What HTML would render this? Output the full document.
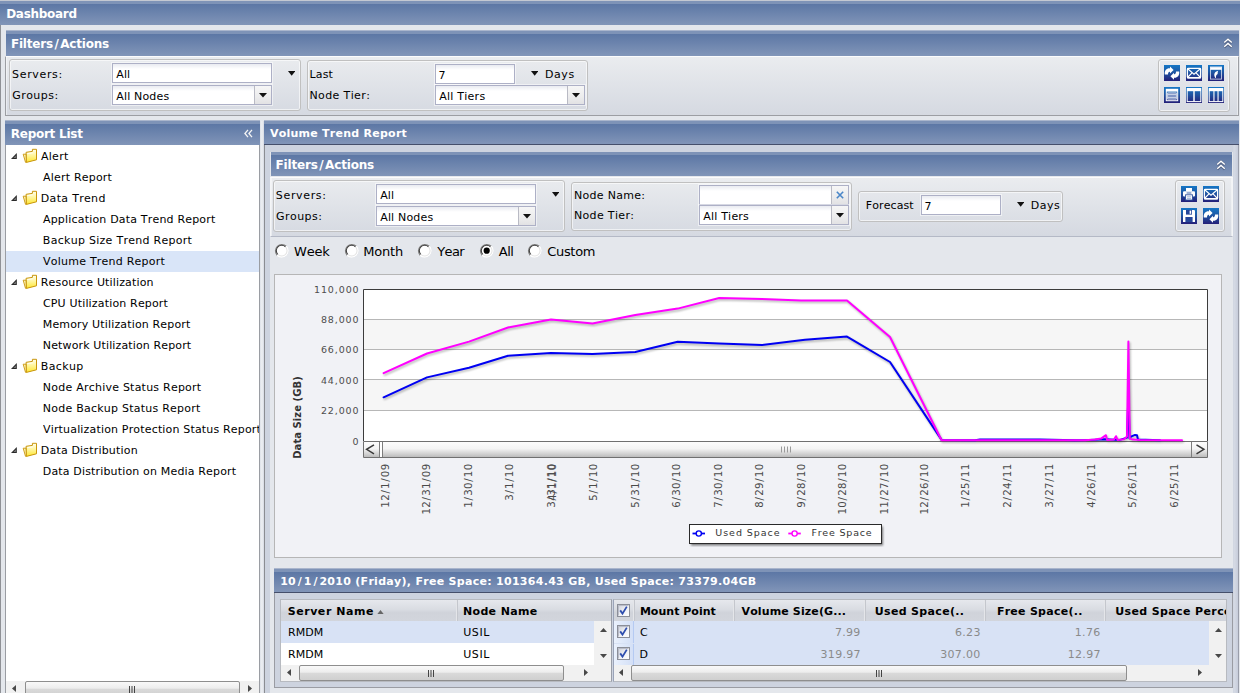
<!DOCTYPE html>
<html lang="en"><head><meta charset="utf-8"><title>Dashboard</title>
<style>
*{box-sizing:border-box;margin:0;padding:0}
html,body{width:1240px;height:693px;overflow:hidden}
body{font-kerning:none;background:#e4e7ec;font-family:"DejaVu Sans","Liberation Sans",Verdana,sans-serif;font-size:11px;color:#000;position:relative}
.abs,.hdr,.fs,.inp,.row,.pbody,.t{position:absolute}
.t{white-space:nowrap;line-height:14px;height:14px}
.b{font-weight:bold}
.w{color:#fff}
.hdr{background:linear-gradient(to bottom,#7e93b7 0,#7e93b7 3px,#5d78a7 3px,#8296b9 100%)}
.pbody{background:linear-gradient(to bottom,#eaecef 0,#d5d9e1 100%);border:1px solid #9c9ea3;border-top:1px solid #fbfbfc;box-shadow:inset 1px 0 0 rgba(255,255,255,.45),inset -1px 0 0 rgba(255,255,255,.45)}
.fs{border:1px solid #c0c0c0;border-radius:3px;box-shadow:inset 0 0 0 1px rgba(255,255,255,.6)}
.inp{background:linear-gradient(to bottom,#e9ebf1 0,#fff 5px,#fff 100%);border:1px solid #adb0c6;box-shadow:0 0 0 1px rgba(255,255,255,.5)}
.btn{position:absolute;top:0;right:0;bottom:0;width:17px;border-left:1px solid #b9bac4;background:linear-gradient(to bottom,#f6f6f6,#ececed 60%,#e2e2e4)}
.row{left:6px;width:253px;height:21px}
.track{position:absolute;background:#f1f1f1}
.thumb{position:absolute;border:1px solid #8e8e8e;border-radius:2px;background:linear-gradient(to bottom,#f9f9f9 0,#ededed 45%,#dadada 50%,#cfcfcf 100%)}
.gh{position:absolute;background:linear-gradient(to bottom,#e6e8ed 0,#d9dce2 45%,#d0d3da 60%,#d2d5dc 100%);overflow:hidden}
.sep{position:absolute;top:600px;width:2px;height:21px;background:linear-gradient(to right,#f4f5f7,#b4b7bf)}
.num{color:#8a8a8a}
.ico{position:absolute;width:16px;height:16px}
</style></head>
<body>
<svg width="0" height="0" style="position:absolute"><defs><linearGradient id="ib" x1="0" y1="0" x2="0" y2="1"><stop offset="0" stop-color="#1577c6"/><stop offset=".45" stop-color="#1e56a3"/><stop offset="1" stop-color="#231f79"/></linearGradient><linearGradient id="cg" x1="0" y1="0" x2="1" y2="1"><stop offset="0" stop-color="#c9ccd6"/><stop offset=".55" stop-color="#f1f2f6"/><stop offset="1" stop-color="#fff"/></linearGradient><linearGradient id="fg" x1="0" y1="0" x2="0" y2="1"><stop offset="0" stop-color="#fffef0"/><stop offset=".45" stop-color="#fff6a0"/><stop offset="1" stop-color="#ffe62e"/></linearGradient></defs></svg>
<div class="abs" style="left:0;top:25px;width:1px;height:668px;background:#8f9196"></div>
<div class="abs" style="left:0px;top:0px;width:1240px;height:25px;background:linear-gradient(to bottom,transparent 0,transparent 0.00px,#c3c8d2 0.00px,#c3c8d2 1.00px,#7e93b7 1.00px,#7e93b7 4.00px,#5c77a5 4.00px,#8195b8 25.00px,transparent 25.00px,transparent 25px)"></div>
<div class="t b w" style="left:6.15px;top:7px;font-size:12px;letter-spacing:-0.278px;">Dashboard</div>
<div class="abs" style="left:6px;top:30px;width:1233px;height:26px;background:linear-gradient(to bottom,transparent 0,transparent 0.30px,#a9b5cc 0.30px,#a9b5cc 0.90px,#7e93b7 0.90px,#7e93b7 4.00px,#5c77a5 4.00px,#8195b8 25.60px,transparent 25.60px,transparent 26px)"></div>
<div class="t b w" style="left:10.90px;top:37px;font-size:12px;letter-spacing:-0.204px;">Filters<span style="margin:0 1.6px">/</span>Actions</div>
<svg class="abs" style="left:1222px;top:37px" width="12" height="12" viewBox="-1 -1 12 12"><path d="M1.2 4.6 L5 1.2 L8.8 4.6 M1.2 8.8 L5 5.4 L8.8 8.8" fill="none" stroke="#3c4660" stroke-width="2.6" opacity=".55" transform="translate(0,.4)"/><path d="M1.2 4.6 L5 1.2 L8.8 4.6 M1.2 8.8 L5 5.4 L8.8 8.8" fill="none" stroke="#fff" stroke-width="1.4"/></svg>
<div class="pbody" style="left:5px;top:56px;width:1234px;height:60px"></div>
<div class="fs" style="left:9px;top:59px;width:292px;height:52px"></div>
<div class="t" style="left:12.07px;top:68px;letter-spacing:0.657px;">Servers:</div>
<div class="t" style="left:12.18px;top:89px;letter-spacing:0.472px;">Groups:</div>
<div class="inp" style="left:112px;top:63px;width:160px;height:20px"></div>
<div class="inp" style="left:112px;top:85px;width:160px;height:20px"><div class="btn"></div></div>
<div class="t" style="left:116.31px;top:68px;letter-spacing:0.090px;">All</div>
<div class="t" style="left:116.31px;top:90px;letter-spacing:0.156px;">All Nodes</div>
<svg class="abs" style="left:287.8px;top:71px" width="7.4" height="4.8" viewBox="0 0 7.4 4.8"><polygon points="0,0 7.4,0 3.7,4.8" fill="#111"/></svg>
<svg class="abs" style="left:258.5px;top:93px" width="8" height="4.5" viewBox="0 0 8 4.5"><polygon points="0,0 8,0 4.0,4.5" fill="#111"/></svg>
<div class="fs" style="left:307px;top:60px;width:281px;height:51px"></div>
<div class="t" style="left:309.42px;top:68px;letter-spacing:0.177px;">Last</div>
<div class="t" style="left:309.42px;top:89px;letter-spacing:0.387px;">Node Tier:</div>
<div class="inp" style="left:435px;top:64px;width:80px;height:20px"></div>
<div class="inp" style="left:435px;top:85px;width:150px;height:20px"><div class="btn"></div></div>
<div class="t" style="left:438.40px;top:69px;letter-spacing:0.300px;">7</div>
<div class="t" style="left:439.21px;top:90px;letter-spacing:0.249px;">All Tiers</div>
<svg class="abs" style="left:530.8px;top:71px" width="7.4" height="4.8" viewBox="0 0 7.4 4.8"><polygon points="0,0 7.4,0 3.7,4.8" fill="#111"/></svg>
<svg class="abs" style="left:571.5px;top:93px" width="8" height="4.5" viewBox="0 0 8 4.5"><polygon points="0,0 8,0 4.0,4.5" fill="#111"/></svg>
<div class="t" style="left:544.92px;top:68px;letter-spacing:0.588px;">Days</div>
<div class="fs" style="left:1158px;top:59px;width:72px;height:53px"></div>
<svg class="ico" style="left:1164px;top:65px" viewBox="0 0 16 16"><rect width="16" height="16" fill="url(#ib)"/><path d="M0.8 9.6 C0.3 5.2 3 3 6 3.4 L6 1.5 L9.6 5 L6 8.5 L6 6.9 C4.8 6.7 4 7.4 4 9.6 Z" fill="#fff"/><g transform="rotate(180 8 8.1)"><path d="M0.8 9.6 C0.3 5.2 3 3 6 3.4 L6 1.5 L9.6 5 L6 8.5 L6 6.9 C4.8 6.7 4 7.4 4 9.6 Z" fill="#fff"/></g></svg>
<svg class="ico" style="left:1186px;top:65px" viewBox="0 0 16 16"><rect width="16" height="16" fill="url(#ib)"/><rect x="1.4" y="3.4" width="13.2" height="9.4" rx=".8" fill="none" stroke="#fff" stroke-width="1.3"/><rect x="1" y="12" width="14" height="1.4" fill="#fff"/><path d="M2 4 L8 9.2 L14 4 M2 12 L6.2 7.6 M14 12 L9.8 7.6" fill="none" stroke="#fff" stroke-width="1.1"/></svg>
<svg class="ico" style="left:1208px;top:65px" viewBox="0 0 16 16"><rect width="16" height="16" fill="url(#ib)"/><rect x="2" y="1.6" width="12" height="3.2" fill="#fff"/><rect x="2.5" y="2.5" width="11" height="11.6" fill="none" stroke="#e4e9f4" stroke-width=".9" opacity=".85"/><path d="M7.4 13 C5.2 9.8 6.4 6.8 10.2 5.8 C9.4 7.2 9.9 8 9.6 9 C8.2 9.8 7.8 11 8 13 Z" fill="#fff"/></svg>
<svg class="ico" style="left:1164px;top:87px" viewBox="0 0 16 16"><rect width="16" height="16" fill="url(#ib)"/><rect x="2.3" y="2.3" width="11.4" height="11.4" fill="none" stroke="#fff" stroke-width="1"/><rect x="2" y="2" width="12" height="2.6" fill="#fff"/><rect x="3.7" y="5.9" width="8.6" height="6.2" fill="#6a82bb" stroke="#fff" stroke-width=".7"/><path d="M3.7 7.7H12.3M3.7 10.3H12.3" stroke="#e9edf6" stroke-width=".9"/></svg>
<svg class="ico" style="left:1186px;top:87px" viewBox="0 0 16 16"><rect width="16" height="16" fill="url(#ib)"/><rect x="1.2" y="1.6" width="13.6" height="13" fill="none" stroke="#fff" stroke-width="1"/><rect x="1" y="1.2" width="14" height="3" fill="#fff"/><rect x="7.3" y="4" width="1.4" height="10.6" fill="#fff"/></svg>
<svg class="ico" style="left:1208px;top:87px" viewBox="0 0 16 16"><rect width="16" height="16" fill="url(#ib)"/><rect x="1.2" y="1.6" width="13.6" height="13" fill="none" stroke="#fff" stroke-width="1"/><rect x="1" y="1.2" width="14" height="3" fill="#fff"/><rect x="5.4" y="4" width="1.1" height="10.6" fill="#fff"/><rect x="9.5" y="4" width="1.1" height="10.6" fill="#fff"/></svg>
<div class="abs" style="left:5px;top:145px;width:255px;height:548px;background:#fff;border-left:1px solid #9a9da3;border-right:1px solid #9a9da3"></div>
<div class="abs" style="left:5px;top:120px;width:255px;height:25px;background:linear-gradient(to bottom,transparent 0,transparent 0.30px,#a9b5cc 0.30px,#a9b5cc 0.90px,#7e93b7 0.90px,#7e93b7 4.00px,#5c77a5 4.00px,#8195b8 25.00px,transparent 25.00px,transparent 25px)"></div>
<div class="t b w" style="left:10.80px;top:127px;font-size:12px;letter-spacing:-0.261px;">Report List</div>
<svg class="abs" style="left:244px;top:129px" width="9" height="9" viewBox="0 0 9 9"><path d="M4 0.8 L0.9 4.5 L4 8.2 M8 0.8 L4.9 4.5 L8 8.2" fill="none" stroke="#f4f4f4" stroke-width="1.3"/></svg>
<div class="row" style="top:146px"><svg class="abs" style="left:5px;top:6.8px" width="6" height="6.2" viewBox="0 0 6 6.2"><polygon points="5.8,0 5.8,6 0,6" fill="#2a2a2a"/><polygon points="4.9,2.6 4.9,5.1 2.5,5.1" fill="#7d7d7d"/></svg><svg class="abs" style="left:16px;top:2px" width="16" height="16" viewBox="16 2 16 16"><path d="M20.1 6.3 L26.4 5.4 L26.4 3.3 L30.5 3.3 L30.5 13.8 L20.4 16.4 Z" fill="url(#fg)" stroke="#c8950a" stroke-width="1" stroke-linejoin="round"/><path d="M17.2 8.2 L20 8.2 L20.3 16.3 L19.5 16.3 Z" fill="#fff3b0" stroke="#c8950a" stroke-width=".9" stroke-linejoin="round"/><path d="M21.3 7.6 L26.8 6.8" stroke="#fffdf0" stroke-width="1" fill="none"/></svg></div>
<div class="t" style="left:41.01px;top:150px;letter-spacing:0.266px;">Alert</div>
<div class="t" style="left:43.01px;top:171px;letter-spacing:0.201px;">Alert Report</div>
<div class="row" style="top:188px"><svg class="abs" style="left:5px;top:6.8px" width="6" height="6.2" viewBox="0 0 6 6.2"><polygon points="5.8,0 5.8,6 0,6" fill="#2a2a2a"/><polygon points="4.9,2.6 4.9,5.1 2.5,5.1" fill="#7d7d7d"/></svg><svg class="abs" style="left:16px;top:2px" width="16" height="16" viewBox="16 2 16 16"><path d="M20.1 6.3 L26.4 5.4 L26.4 3.3 L30.5 3.3 L30.5 13.8 L20.4 16.4 Z" fill="url(#fg)" stroke="#c8950a" stroke-width="1" stroke-linejoin="round"/><path d="M17.2 8.2 L20 8.2 L20.3 16.3 L19.5 16.3 Z" fill="#fff3b0" stroke="#c8950a" stroke-width=".9" stroke-linejoin="round"/><path d="M21.3 7.6 L26.8 6.8" stroke="#fffdf0" stroke-width="1" fill="none"/></svg></div>
<div class="t" style="left:40.82px;top:192px;letter-spacing:0.317px;">Data Trend</div>
<div class="t" style="left:43.01px;top:213px;letter-spacing:0.183px;">Application Data Trend Report</div>
<div class="t" style="left:42.82px;top:234px;letter-spacing:0.278px;">Backup Size Trend Report</div>
<div class="row" style="top:251px;background:#d9e5f8"></div>
<div class="t" style="left:43.01px;top:255px;letter-spacing:0.232px;">Volume Trend Report</div>
<div class="row" style="top:272px"><svg class="abs" style="left:5px;top:6.8px" width="6" height="6.2" viewBox="0 0 6 6.2"><polygon points="5.8,0 5.8,6 0,6" fill="#2a2a2a"/><polygon points="4.9,2.6 4.9,5.1 2.5,5.1" fill="#7d7d7d"/></svg><svg class="abs" style="left:16px;top:2px" width="16" height="16" viewBox="16 2 16 16"><path d="M20.1 6.3 L26.4 5.4 L26.4 3.3 L30.5 3.3 L30.5 13.8 L20.4 16.4 Z" fill="url(#fg)" stroke="#c8950a" stroke-width="1" stroke-linejoin="round"/><path d="M17.2 8.2 L20 8.2 L20.3 16.3 L19.5 16.3 Z" fill="#fff3b0" stroke="#c8950a" stroke-width=".9" stroke-linejoin="round"/><path d="M21.3 7.6 L26.8 6.8" stroke="#fffdf0" stroke-width="1" fill="none"/></svg></div>
<div class="t" style="left:40.82px;top:276px;letter-spacing:0.154px;">Resource Utilization</div>
<div class="t" style="left:42.98px;top:297px;letter-spacing:0.164px;">CPU Utilization Report</div>
<div class="t" style="left:42.82px;top:318px;letter-spacing:0.152px;">Memory Utilization Report</div>
<div class="t" style="left:42.82px;top:339px;letter-spacing:0.134px;">Network Utilization Report</div>
<div class="row" style="top:356px"><svg class="abs" style="left:5px;top:6.8px" width="6" height="6.2" viewBox="0 0 6 6.2"><polygon points="5.8,0 5.8,6 0,6" fill="#2a2a2a"/><polygon points="4.9,2.6 4.9,5.1 2.5,5.1" fill="#7d7d7d"/></svg><svg class="abs" style="left:16px;top:2px" width="16" height="16" viewBox="16 2 16 16"><path d="M20.1 6.3 L26.4 5.4 L26.4 3.3 L30.5 3.3 L30.5 13.8 L20.4 16.4 Z" fill="url(#fg)" stroke="#c8950a" stroke-width="1" stroke-linejoin="round"/><path d="M17.2 8.2 L20 8.2 L20.3 16.3 L19.5 16.3 Z" fill="#fff3b0" stroke="#c8950a" stroke-width=".9" stroke-linejoin="round"/><path d="M21.3 7.6 L26.8 6.8" stroke="#fffdf0" stroke-width="1" fill="none"/></svg></div>
<div class="t" style="left:40.82px;top:360px;letter-spacing:0.364px;">Backup</div>
<div class="t" style="left:42.82px;top:381px;letter-spacing:0.229px;">Node Archive Status Report</div>
<div class="t" style="left:42.82px;top:402px;letter-spacing:0.232px;">Node Backup Status Report</div>
<div class="t" style="left:43.01px;top:423px;letter-spacing:0.169px;width:215.99px;overflow:hidden">Virtualization Protection Status Report</div>
<div class="row" style="top:440px"><svg class="abs" style="left:5px;top:6.8px" width="6" height="6.2" viewBox="0 0 6 6.2"><polygon points="5.8,0 5.8,6 0,6" fill="#2a2a2a"/><polygon points="4.9,2.6 4.9,5.1 2.5,5.1" fill="#7d7d7d"/></svg><svg class="abs" style="left:16px;top:2px" width="16" height="16" viewBox="16 2 16 16"><path d="M20.1 6.3 L26.4 5.4 L26.4 3.3 L30.5 3.3 L30.5 13.8 L20.4 16.4 Z" fill="url(#fg)" stroke="#c8950a" stroke-width="1" stroke-linejoin="round"/><path d="M17.2 8.2 L20 8.2 L20.3 16.3 L19.5 16.3 Z" fill="#fff3b0" stroke="#c8950a" stroke-width=".9" stroke-linejoin="round"/><path d="M21.3 7.6 L26.8 6.8" stroke="#fffdf0" stroke-width="1" fill="none"/></svg></div>
<div class="t" style="left:40.82px;top:444px;letter-spacing:0.180px;">Data Distribution</div>
<div class="t" style="left:42.82px;top:465px;letter-spacing:0.160px;">Data Distribution on Media Report</div>
<div class="track" style="left:6px;top:681px;width:253px;height:16px"></div><svg class="abs" style="left:12px;top:685px" width="4" height="7" viewBox="0 0 4 7"><polygon points="4,0 4,7 0,3.5" fill="#484848"/></svg><svg class="abs" style="left:248px;top:685px" width="4" height="7" viewBox="0 0 4 7"><polygon points="0,0 0,7 4,3.5" fill="#484848"/></svg><div class="thumb" style="left:24.5px;top:681px;width:215.0px;height:16px"></div><svg class="abs" style="left:128.0px;top:685.5px" width="8" height="7" viewBox="0 0 8 7"><path d="M1.5 0V7M4 0V7M6.5 0V7" stroke="#444" stroke-width="1"/></svg>
<div class="abs" style="left:260px;top:121px;width:4px;height:572px;background:linear-gradient(to right,#dde1e8,#eef0f3,#d5d9e2)"></div>
<div class="abs" style="left:264px;top:145px;width:975px;height:548px;background:linear-gradient(to right,#cdd3df 0,#cdd3df 968px,#d6dbe5 969px,#c3c9d8 974px);border-left:1px solid #8b8d92;border-right:1px solid #9a9eaa"></div>
<div class="abs" style="left:264px;top:120px;width:975px;height:25px;background:linear-gradient(to bottom,transparent 0,transparent 0.30px,#a9b5cc 0.30px,#a9b5cc 0.90px,#7e93b7 0.90px,#7e93b7 4.00px,#5c77a5 4.00px,#8195b8 24.00px,#454f6b 24.00px,#454f6b 25.00px,transparent 25.00px,transparent 25px)"></div>
<div class="t b w" style="left:269.95px;top:127px;letter-spacing:0.251px;">Volume Trend Report</div>
<div class="abs" style="left:270px;top:152px;width:963px;height:541px;background:#e4e7ec"></div>
<div class="abs" style="left:271px;top:151px;width:961px;height:26px;background:linear-gradient(to bottom,transparent 0,transparent 0.90px,#a9b5cc 0.90px,#a9b5cc 1.10px,#7e93b7 1.10px,#7e93b7 4.00px,#5c77a5 4.00px,#8195b8 25.50px,transparent 25.50px,transparent 26px)"></div>
<div class="t b w" style="left:275.50px;top:158.0px;font-size:12px;letter-spacing:-0.168px;">Filters<span style="margin:0 1.6px">/</span>Actions</div>
<svg class="abs" style="left:1215px;top:159px" width="12" height="12" viewBox="-1 -1 12 12"><path d="M1.2 4.6 L5 1.2 L8.8 4.6 M1.2 8.8 L5 5.4 L8.8 8.8" fill="none" stroke="#3c4660" stroke-width="2.6" opacity=".55" transform="translate(0,.4)"/><path d="M1.2 4.6 L5 1.2 L8.8 4.6 M1.2 8.8 L5 5.4 L8.8 8.8" fill="none" stroke="#fff" stroke-width="1.4"/></svg>
<div class="pbody" style="left:270px;top:177px;width:963px;height:60px;border-left-color:#f4f5f7;border-right-color:#f4f5f7;border-bottom-color:#b4b9c6"></div>
<div class="fs" style="left:273px;top:180px;width:292px;height:52px"></div>
<div class="t" style="left:275.87px;top:189px;letter-spacing:0.657px;">Servers:</div>
<div class="t" style="left:275.98px;top:210px;letter-spacing:0.472px;">Groups:</div>
<div class="inp" style="left:376px;top:184px;width:160px;height:20px"></div>
<div class="inp" style="left:376px;top:206px;width:160px;height:20px"><div class="btn"></div></div>
<div class="t" style="left:380.21px;top:189px;letter-spacing:0.140px;">All</div>
<div class="t" style="left:380.21px;top:211px;letter-spacing:0.169px;">All Nodes</div>
<svg class="abs" style="left:551.8px;top:192px" width="7.4" height="4.8" viewBox="0 0 7.4 4.8"><polygon points="0,0 7.4,0 3.7,4.8" fill="#111"/></svg>
<svg class="abs" style="left:522.5px;top:214px" width="8" height="4.5" viewBox="0 0 8 4.5"><polygon points="0,0 8,0 4.0,4.5" fill="#111"/></svg>
<div class="fs" style="left:571px;top:182px;width:281px;height:49px"></div>
<div class="t" style="left:573.92px;top:189px;letter-spacing:0.311px;">Node Name:</div>
<div class="t" style="left:573.92px;top:209px;letter-spacing:0.343px;">Node Tier:</div>
<div class="inp" style="left:699px;top:185px;width:150px;height:20px"><div class="btn"></div></div>
<svg class="abs" style="left:835.5px;top:190.5px" width="8" height="8" viewBox="0 0 8 8"><path d="M.8 .8L7.2 7.2M7.2 .8L.8 7.2" stroke="#4a86c8" stroke-width="1.6"/></svg>
<div class="inp" style="left:699px;top:205px;width:150px;height:20px"><div class="btn"></div></div>
<div class="t" style="left:703.21px;top:210px;letter-spacing:0.212px;">All Tiers</div>
<svg class="abs" style="left:835.5px;top:213px" width="8" height="4.5" viewBox="0 0 8 4.5"><polygon points="0,0 8,0 4.0,4.5" fill="#111"/></svg>
<div class="fs" style="left:858px;top:191px;width:205px;height:31px"></div>
<div class="t" style="left:865.82px;top:199px;letter-spacing:0.095px;">Forecast</div>
<div class="inp" style="left:921px;top:195px;width:80px;height:20px"></div>
<div class="t" style="left:924.60px;top:199.5px;letter-spacing:0.300px;">7</div>
<svg class="abs" style="left:1016.6px;top:201.8px" width="7.4" height="4.8" viewBox="0 0 7.4 4.8"><polygon points="0,0 7.4,0 3.7,4.8" fill="#111"/></svg>
<div class="t" style="left:1030.82px;top:199px;letter-spacing:0.522px;">Days</div>
<div class="fs" style="left:1175px;top:180px;width:50px;height:52px"></div>
<svg class="ico" style="left:1181px;top:186px" viewBox="0 0 16 16"><rect width="16" height="16" fill="url(#ib)"/><rect x="5" y="2" width="6" height="3.4" fill="#fff"/><rect x="2" y="5.2" width="12" height="5.4" rx="1" fill="#fff"/><rect x="4.6" y="8.8" width="6.8" height="5.2" fill="#fff" stroke="#2a4f9c" stroke-width=".9"/><path d="M6 10.8H10M6 12.4H10" stroke="#8fa4cf" stroke-width=".8"/><rect x="5.6" y="6.4" width="4.8" height="1.2" fill="#5c7cb8"/></svg>
<svg class="ico" style="left:1203px;top:186px" viewBox="0 0 16 16"><rect width="16" height="16" fill="url(#ib)"/><rect x="1.4" y="3.4" width="13.2" height="9.4" rx=".8" fill="none" stroke="#fff" stroke-width="1.3"/><rect x="1" y="12" width="14" height="1.4" fill="#fff"/><path d="M2 4 L8 9.2 L14 4 M2 12 L6.2 7.6 M14 12 L9.8 7.6" fill="none" stroke="#fff" stroke-width="1.1"/></svg>
<svg class="ico" style="left:1181px;top:208px" viewBox="0 0 16 16"><rect width="16" height="16" fill="url(#ib)"/><path d="M2 2H13.2L14 2.8V14H2Z" fill="#fff"/><rect x="5" y="2" width="6" height="4.6" fill="#25479a"/><rect x="8.6" y="2.6" width="1.6" height="3.2" fill="#fff"/><rect x="4.4" y="9" width="7.2" height="5" fill="#25479a"/></svg>
<svg class="ico" style="left:1203px;top:208px" viewBox="0 0 16 16"><rect width="16" height="16" fill="url(#ib)"/><path d="M0.8 9.6 C0.3 5.2 3 3 6 3.4 L6 1.5 L9.6 5 L6 8.5 L6 6.9 C4.8 6.7 4 7.4 4 9.6 Z" fill="#fff"/><g transform="rotate(180 8 8.1)"><path d="M0.8 9.6 C0.3 5.2 3 3 6 3.4 L6 1.5 L9.6 5 L6 8.5 L6 6.9 C4.8 6.7 4 7.4 4 9.6 Z" fill="#fff"/></g></svg>
<svg class="abs" style="left:274.2px;top:243.3px" width="15.4" height="15.4" viewBox="0 0 15 15"><circle cx="7.5" cy="7.5" r="6.4" fill="#fff"/><path d="M3.05 11.95 A6.3 6.3 0 0 1 11.95 3.05" fill="none" stroke="#7f7f7f" stroke-width="1.1"/><path d="M3.8 11.2 A5.2 5.2 0 0 1 11.2 3.8" fill="none" stroke="#404040" stroke-width="1"/><path d="M11.95 3.05 A6.3 6.3 0 0 1 3.05 11.95" fill="none" stroke="#fff" stroke-width="1.1"/><path d="M11.2 3.8 A5.2 5.2 0 0 1 3.8 11.2" fill="none" stroke="#e3e3e3" stroke-width="1"/></svg>
<div class="t" style="left:293.97px;top:245px;font-size:13px;letter-spacing:-0.170px;">Week</div>
<svg class="abs" style="left:344.2px;top:243.3px" width="15.4" height="15.4" viewBox="0 0 15 15"><circle cx="7.5" cy="7.5" r="6.4" fill="#fff"/><path d="M3.05 11.95 A6.3 6.3 0 0 1 11.95 3.05" fill="none" stroke="#7f7f7f" stroke-width="1.1"/><path d="M3.8 11.2 A5.2 5.2 0 0 1 11.2 3.8" fill="none" stroke="#404040" stroke-width="1"/><path d="M11.95 3.05 A6.3 6.3 0 0 1 3.05 11.95" fill="none" stroke="#fff" stroke-width="1.1"/><path d="M11.2 3.8 A5.2 5.2 0 0 1 3.8 11.2" fill="none" stroke="#e3e3e3" stroke-width="1"/></svg>
<div class="t" style="left:363.22px;top:245px;font-size:13px;letter-spacing:-0.191px;">Month</div>
<svg class="abs" style="left:417.2px;top:243.3px" width="15.4" height="15.4" viewBox="0 0 15 15"><circle cx="7.5" cy="7.5" r="6.4" fill="#fff"/><path d="M3.05 11.95 A6.3 6.3 0 0 1 11.95 3.05" fill="none" stroke="#7f7f7f" stroke-width="1.1"/><path d="M3.8 11.2 A5.2 5.2 0 0 1 11.2 3.8" fill="none" stroke="#404040" stroke-width="1"/><path d="M11.95 3.05 A6.3 6.3 0 0 1 3.05 11.95" fill="none" stroke="#fff" stroke-width="1.1"/><path d="M11.2 3.8 A5.2 5.2 0 0 1 3.8 11.2" fill="none" stroke="#e3e3e3" stroke-width="1"/></svg>
<div class="t" style="left:437.33px;top:245px;font-size:13px;letter-spacing:-0.658px;">Year</div>
<svg class="abs" style="left:478.9px;top:243.3px" width="15.4" height="15.4" viewBox="0 0 15 15"><circle cx="7.5" cy="7.5" r="6.4" fill="#fff"/><path d="M3.05 11.95 A6.3 6.3 0 0 1 11.95 3.05" fill="none" stroke="#7f7f7f" stroke-width="1.1"/><path d="M3.8 11.2 A5.2 5.2 0 0 1 11.2 3.8" fill="none" stroke="#404040" stroke-width="1"/><path d="M11.95 3.05 A6.3 6.3 0 0 1 3.05 11.95" fill="none" stroke="#fff" stroke-width="1.1"/><path d="M11.2 3.8 A5.2 5.2 0 0 1 3.8 11.2" fill="none" stroke="#e3e3e3" stroke-width="1"/><circle cx="7.5" cy="7.5" r="3" fill="#000"/></svg>
<div class="t" style="left:498.80px;top:245px;font-size:13px;letter-spacing:-0.548px;">All</div>
<svg class="abs" style="left:527.2px;top:243.3px" width="15.4" height="15.4" viewBox="0 0 15 15"><circle cx="7.5" cy="7.5" r="6.4" fill="#fff"/><path d="M3.05 11.95 A6.3 6.3 0 0 1 11.95 3.05" fill="none" stroke="#7f7f7f" stroke-width="1.1"/><path d="M3.8 11.2 A5.2 5.2 0 0 1 11.2 3.8" fill="none" stroke="#404040" stroke-width="1"/><path d="M11.95 3.05 A6.3 6.3 0 0 1 3.05 11.95" fill="none" stroke="#fff" stroke-width="1.1"/><path d="M11.2 3.8 A5.2 5.2 0 0 1 3.8 11.2" fill="none" stroke="#e3e3e3" stroke-width="1"/></svg>
<div class="t" style="left:547.17px;top:245px;font-size:13px;letter-spacing:-0.294px;">Custom</div>
<svg class="abs" style="left:274px;top:274px" width="948" height="284" viewBox="274 274 948 284" font-family="'DejaVu Sans','Liberation Sans',sans-serif" font-size="9.5">
<defs><linearGradient id="sg" x1="0" y1="0" x2="0" y2="1"><stop offset="0" stop-color="#fdfdfd"/><stop offset=".45" stop-color="#f4f4f4"/><stop offset="1" stop-color="#b9b9b9"/></linearGradient><filter id="bl" x="-5%" y="-5%" width="110%" height="110%"><feGaussianBlur stdDeviation=".8"/></filter></defs>
<rect x="274.5" y="274.5" width="947" height="283" fill="#f1f2f6" stroke="#b6b6b6"/>
<rect x="364" y="289" width="843" height="152" fill="#fff"/>
<rect x="364" y="319.5" width="843" height="30" fill="#f6f6f6"/><rect x="364" y="379.5" width="843" height="31" fill="#f6f6f6"/>
<path d="M364 319.5H1207" stroke="#b7b7b7" stroke-width="1"/>
<path d="M364 349.5H1207" stroke="#b7b7b7" stroke-width="1"/>
<path d="M364 379.5H1207" stroke="#b7b7b7" stroke-width="1"/>
<path d="M364 410.5H1207" stroke="#b7b7b7" stroke-width="1"/>
<path d="M363.5 441V289.5H1207.5V441" fill="none" stroke="#3c3c3c" stroke-width="1"/>
<text x="358.6" y="293.1" text-anchor="end" fill="#4d4d4d" textLength="44.6" lengthAdjust="spacing">110,000</text>
<text x="358.6" y="323.1" text-anchor="end" fill="#4d4d4d" textLength="37.7" lengthAdjust="spacing">88,000</text>
<text x="358.6" y="353.1" text-anchor="end" fill="#4d4d4d" textLength="37.7" lengthAdjust="spacing">66,000</text>
<text x="358.6" y="383.6" text-anchor="end" fill="#4d4d4d" textLength="37.7" lengthAdjust="spacing">44,000</text>
<text x="358.6" y="414.1" text-anchor="end" fill="#4d4d4d" textLength="37.7" lengthAdjust="spacing">22,000</text>
<text x="358.6" y="444.6" text-anchor="end" fill="#4d4d4d">0</text>
<text transform="translate(301,417.5) rotate(-90)" text-anchor="middle" font-weight="bold" font-size="10" fill="#333" textLength="82.6" lengthAdjust="spacing">Data Size (GB)</text>
<text transform="translate(388.6,464.2) rotate(-90)" text-anchor="end" fill="#4a4a4a" font-size="10.2" dx="0.45 0.45 0.75 1.1 0.75 1.1 0.45">12/1/09</text>
<text transform="translate(430.1,464.2) rotate(-90)" text-anchor="end" fill="#4a4a4a" font-size="10.2" dx="0.45 0.45 0.75 1.1 0.45 0.75 1.1 0.45">12/31/09</text>
<text transform="translate(471.5,464.2) rotate(-90)" text-anchor="end" fill="#4a4a4a" font-size="10.2" dx="0.45 0.75 1.1 0.45 0.75 1.1 0.45">1/30/10</text>
<text transform="translate(513.0,464.2) rotate(-90)" text-anchor="end" fill="#4a4a4a" font-size="10.2" dx="0.45 0.75 1.1 0.75 1.1 0.45">3/1/10</text>
<text transform="translate(554.5,464.2) rotate(-90)" text-anchor="end" fill="#4a4a4a" font-size="10.2" dx="0.45 0.75 1.1 0.45 0.75 1.1 0.45">3/31/10</text>
<text transform="translate(555.8,464.2) rotate(-90)" text-anchor="end" fill="#4a4a4a" font-size="10.2" dx="0.45 0.75 1.1 0.75 1.1 0.45">4/1/10</text>
<text transform="translate(597.3,464.2) rotate(-90)" text-anchor="end" fill="#4a4a4a" font-size="10.2" dx="0.45 0.75 1.1 0.75 1.1 0.45">5/1/10</text>
<text transform="translate(638.8,464.2) rotate(-90)" text-anchor="end" fill="#4a4a4a" font-size="10.2" dx="0.45 0.75 1.1 0.45 0.75 1.1 0.45">5/31/10</text>
<text transform="translate(680.2,464.2) rotate(-90)" text-anchor="end" fill="#4a4a4a" font-size="10.2" dx="0.45 0.75 1.1 0.45 0.75 1.1 0.45">6/30/10</text>
<text transform="translate(721.7,464.2) rotate(-90)" text-anchor="end" fill="#4a4a4a" font-size="10.2" dx="0.45 0.75 1.1 0.45 0.75 1.1 0.45">7/30/10</text>
<text transform="translate(763.2,464.2) rotate(-90)" text-anchor="end" fill="#4a4a4a" font-size="10.2" dx="0.45 0.75 1.1 0.45 0.75 1.1 0.45">8/29/10</text>
<text transform="translate(804.6,464.2) rotate(-90)" text-anchor="end" fill="#4a4a4a" font-size="10.2" dx="0.45 0.75 1.1 0.45 0.75 1.1 0.45">9/28/10</text>
<text transform="translate(846.1,464.2) rotate(-90)" text-anchor="end" fill="#4a4a4a" font-size="10.2" dx="0.45 0.45 0.75 1.1 0.45 0.75 1.1 0.45">10/28/10</text>
<text transform="translate(887.6,464.2) rotate(-90)" text-anchor="end" fill="#4a4a4a" font-size="10.2" dx="0.45 0.45 0.75 1.1 0.45 0.75 1.1 0.45">11/27/10</text>
<text transform="translate(927.6,464.2) rotate(-90)" text-anchor="end" fill="#4a4a4a" font-size="10.2" dx="0.45 0.45 0.75 1.1 0.45 0.75 1.1 0.45">12/26/10</text>
<text transform="translate(969.1,464.2) rotate(-90)" text-anchor="end" fill="#4a4a4a" font-size="10.2" dx="0.45 0.75 1.1 0.45 0.75 1.1 0.45">1/25/11</text>
<text transform="translate(1010.6,464.2) rotate(-90)" text-anchor="end" fill="#4a4a4a" font-size="10.2" dx="0.45 0.75 1.1 0.45 0.75 1.1 0.45">2/24/11</text>
<text transform="translate(1053.4,464.2) rotate(-90)" text-anchor="end" fill="#4a4a4a" font-size="10.2" dx="0.45 0.75 1.1 0.45 0.75 1.1 0.45">3/27/11</text>
<text transform="translate(1094.9,464.2) rotate(-90)" text-anchor="end" fill="#4a4a4a" font-size="10.2" dx="0.45 0.75 1.1 0.45 0.75 1.1 0.45">4/26/11</text>
<text transform="translate(1136.3,464.2) rotate(-90)" text-anchor="end" fill="#4a4a4a" font-size="10.2" dx="0.45 0.75 1.1 0.45 0.75 1.1 0.45">5/26/11</text>
<text transform="translate(1177.8,464.2) rotate(-90)" text-anchor="end" fill="#4a4a4a" font-size="10.2" dx="0.45 0.75 1.1 0.45 0.75 1.1 0.45">6/25/11</text>
<rect x="364" y="441.5" width="843" height="16" fill="url(#sg)"/>
<rect x="379.5" y="442" width="2.5" height="15" fill="#fff"/>
<path d="M363.5 441.5V457.5H1207.5V441.5Z" fill="none" stroke="#707070"/>
<path d="M379.5 442V457M382.5 442V457M1191.5 442V457" stroke="#7d7d7d"/>
<path d="M374 444.8L366.6 449.3L374 453.8" fill="none" stroke="#3a3a3a" stroke-width="1.5"/>
<path d="M1196.5 444.8L1203.9 449.3L1196.5 453.8" fill="none" stroke="#3a3a3a" stroke-width="1.5"/>
<path d="M781.5 446.5V452.5M784.5 446.5V452.5M787.5 446.5V452.5M790.5 446.5V452.5" stroke="#9a9a9a"/>
<g opacity=".3" transform="translate(1,1.6)" filter="url(#bl)"><polyline points="383.6,397.3 427.0,377.4 469.0,367.8 508.0,355.8 551.0,353.0 592.5,354.0 635.3,352.0 677.7,341.8 719.2,343.6 762.0,345.0 805.0,339.7 847.0,336.6 890.0,362.0 941.6,439.9 975.0,440.2 980.0,439.4 1040.0,439.4 1075.0,440.2 1090.0,440.1 1105.0,439.2 1120.0,439.9 1127.0,437.6 1128.5,392.0 1129.5,438.2 1131.0,436.6 1135.0,434.9 1137.0,435.2 1138.0,439.6 1160.0,440.2" fill="none" stroke="#000" stroke-width="2" stroke-linejoin="round" stroke-linecap="round"/><polyline points="383.6,373.2 427.0,353.5 469.0,341.6 508.0,327.5 551.0,319.5 592.5,323.4 635.3,315.0 677.7,308.6 719.2,298.0 762.0,299.0 801.0,300.5 847.0,300.5 890.0,337.0 941.6,440.2 1085.0,440.2 1095.0,439.6 1101.0,438.6 1106.0,435.2 1107.0,439.9 1114.0,439.6 1116.0,436.2 1117.5,439.9 1124.0,439.2 1127.0,436.6 1128.4,341.5 1129.8,438.6 1133.0,439.6 1140.0,440.0 1182.0,440.2" fill="none" stroke="#000" stroke-width="2" stroke-linejoin="round" stroke-linecap="round"/></g>
<polyline points="383.6,397.3 427.0,377.4 469.0,367.8 508.0,355.8 551.0,353.0 592.5,354.0 635.3,352.0 677.7,341.8 719.2,343.6 762.0,345.0 805.0,339.7 847.0,336.6 890.0,362.0 941.6,439.9 975.0,440.2 980.0,439.4 1040.0,439.4 1075.0,440.2 1090.0,440.1 1105.0,439.2 1120.0,439.9 1127.0,437.6 1128.5,392.0 1129.5,438.2 1131.0,436.6 1135.0,434.9 1137.0,435.2 1138.0,439.6 1160.0,440.2" fill="none" stroke="#0000f2" stroke-width="2" stroke-linejoin="round" stroke-linecap="round"/>
<polyline points="383.6,373.2 427.0,353.5 469.0,341.6 508.0,327.5 551.0,319.5 592.5,323.4 635.3,315.0 677.7,308.6 719.2,298.0 762.0,299.0 801.0,300.5 847.0,300.5 890.0,337.0 941.6,440.2 1085.0,440.2 1095.0,439.6 1101.0,438.6 1106.0,435.2 1107.0,439.9 1114.0,439.6 1116.0,436.2 1117.5,439.9 1124.0,439.2 1127.0,436.6 1128.4,341.5 1129.8,438.6 1133.0,439.6 1140.0,440.0 1182.0,440.2" fill="none" stroke="#ff00ff" stroke-width="2" stroke-linejoin="round" stroke-linecap="round"/>
<rect x="691" y="526.5" width="192" height="19" fill="#000" opacity=".5" filter="url(#bl)"/>
<rect x="689.5" y="524.5" width="192" height="19" fill="#fff" stroke="#2a2a2a"/>
<path d="M692.5 533.5H705" stroke="#0000f2" stroke-width="1.8"/><circle cx="698.8" cy="533.5" r="2.6" fill="#fff" stroke="#0000f2" stroke-width="1.4"/>
<text x="715.3" y="536" fill="#333" textLength="64.3" lengthAdjust="spacing">Used Space</text>
<path d="M788.3 533.5H800.8" stroke="#ff00ff" stroke-width="1.8"/><circle cx="794.6" cy="533.5" r="2.6" fill="#fff" stroke="#ff00ff" stroke-width="1.4"/>
<text x="811.4" y="536" fill="#333" textLength="60.3" lengthAdjust="spacing">Free Space</text>
</svg>
<div class="abs" style="left:274px;top:593px;width:959px;height:95px;background:#cdd3df;border:1px solid #9a9ca3;border-top:none"></div>
<div class="abs" style="left:274px;top:568px;width:959px;height:25px;background:linear-gradient(to bottom,transparent 0,transparent 0.10px,#a9b5cc 0.10px,#a9b5cc 0.70px,#7e93b7 0.70px,#7e93b7 4.00px,#5c77a5 4.00px,#8195b8 24.00px,#454f6b 24.00px,#454f6b 25.00px,transparent 25.00px,transparent 25px)"></div>
<div class="t b w" style="left:280.16px;top:575px;letter-spacing:0.291px;">10<span style="margin:0 1.7px">/</span>1<span style="margin:0 1.7px">/</span>2010 (Friday), Free Space: 101364.43 GB, Used Space: 73379.04GB</div>
<div class="abs" style="left:280px;top:599px;width:332px;height:83px;background:#fff;border:1px solid #b7bac0;border-right-color:#9a9ea8"></div>
<div class="gh" style="left:281px;top:600px;width:330px;height:21px"></div>
<div class="t b" style="left:287.71px;top:605px;letter-spacing:0.548px;">Server Name</div>
<div class="t b" style="left:462.89px;top:605px;letter-spacing:0.370px;">Node Name</div>
<svg class="abs" style="left:377px;top:609.5px" width="7" height="4.5" viewBox="0 0 7 4.5"><polygon points="0,4.5 7,4.5 3.5,0" fill="#666"/></svg>
<div class="sep" style="left:456px"></div>
<div class="abs" style="left:281px;top:621px;width:313px;height:22px;background:#d8e2f5"></div>
<div class="t" style="left:288.02px;top:626px;letter-spacing:0.053px;">RMDM</div>
<div class="t" style="left:463.14px;top:626px;letter-spacing:0.636px;">USIL</div>
<div class="t" style="left:288.02px;top:648px;letter-spacing:0.053px;">RMDM</div>
<div class="t" style="left:463.14px;top:648px;letter-spacing:0.636px;">USIL</div>
<div class="track" style="left:594px;top:621px;width:17px;height:44px"></div><svg class="abs" style="left:599.5px;top:628px" width="7" height="4" viewBox="0 0 7 4"><polygon points="0,4 7,4 3.5,0" fill="#484848"/></svg><svg class="abs" style="left:599.5px;top:654px" width="7" height="4" viewBox="0 0 7 4"><polygon points="0,0 7,0 3.5,4" fill="#484848"/></svg>
<div class="track" style="left:281px;top:665px;width:313px;height:16px"></div><svg class="abs" style="left:287px;top:669px" width="4" height="7" viewBox="0 0 4 7"><polygon points="4,0 4,7 0,3.5" fill="#484848"/></svg><svg class="abs" style="left:584px;top:669px" width="4" height="7" viewBox="0 0 4 7"><polygon points="0,0 0,7 4,3.5" fill="#484848"/></svg><div class="thumb" style="left:299px;top:665px;width:264.5px;height:16px"></div><svg class="abs" style="left:427.25px;top:669.5px" width="8" height="7" viewBox="0 0 8 7"><path d="M1.5 0V7M4 0V7M6.5 0V7" stroke="#444" stroke-width="1"/></svg>
<div class="track" style="left:594px;top:665px;width:17px;height:16px"></div>
<div class="abs" style="left:613px;top:599px;width:614px;height:83px;background:#d8e2f5;border:1px solid #b7bac0;border-left-color:#9aa3b8"></div>
<div class="gh" style="left:614px;top:600px;width:612px;height:21px"></div>
<div class="t b" style="left:639.89px;top:605px;letter-spacing:0.023px;">Mount Point</div>
<div class="t b" style="left:741.55px;top:605px;letter-spacing:0.127px;">Volume Size(G...</div>
<div class="t b" style="left:874.79px;top:605px;letter-spacing:0.334px;">Used Space(..</div>
<div class="t b" style="left:996.89px;top:605px;letter-spacing:0.271px;">Free Space(..</div>
<div class="t b" style="left:1115.2px;top:605px;letter-spacing:.38px;width:110.8px;overflow:hidden">Used Space Percentage</div>
<div class="sep" style="left:633px"></div>
<div class="sep" style="left:733px"></div>
<div class="sep" style="left:864px"></div>
<div class="sep" style="left:984px"></div>
<div class="sep" style="left:1104px"></div>
<svg class="abs" style="left:617px;top:604px" width="13" height="13" viewBox="0 0 13 13"><rect x=".5" y=".5" width="12" height="12" fill="url(#cg)" stroke="#8b8e98"/><path d="M1.5 11.5V1.5H11.5" fill="none" stroke="#b9bcc8"/><path d="M3.2 6.4 L5.5 9.6 L9.8 2.6" fill="none" stroke="#2f4eae" stroke-width="1.8"/></svg>
<div class="abs" style="left:614px;top:621px;width:20px;height:22px;background:linear-gradient(to right,#eaf1fd,#d3dff6);border-right:1px solid #b5caf2"></div>
<svg class="abs" style="left:617px;top:625px" width="13" height="13" viewBox="0 0 13 13"><rect x=".5" y=".5" width="12" height="12" fill="url(#cg)" stroke="#8b8e98"/><path d="M1.5 11.5V1.5H11.5" fill="none" stroke="#b9bcc8"/><path d="M3.2 6.4 L5.5 9.6 L9.8 2.6" fill="none" stroke="#2f4eae" stroke-width="1.8"/></svg>
<div class="t" style="left:639.98px;top:626px;letter-spacing:0.300px;">C</div>
<div class="t num" style="left:834.98px;top:626px;letter-spacing:0.300px">7.99</div>
<div class="t num" style="left:954.99px;top:626px;letter-spacing:0.300px">6.23</div>
<div class="t num" style="left:1074.80px;top:626px;letter-spacing:0.300px">1.76</div>
<div class="abs" style="left:614px;top:644px;width:20px;height:21px;background:linear-gradient(to right,#eaf1fd,#d3dff6);border-right:1px solid #b5caf2"></div>
<svg class="abs" style="left:617px;top:647px" width="13" height="13" viewBox="0 0 13 13"><rect x=".5" y=".5" width="12" height="12" fill="url(#cg)" stroke="#8b8e98"/><path d="M1.5 11.5V1.5H11.5" fill="none" stroke="#b9bcc8"/><path d="M3.2 6.4 L5.5 9.6 L9.8 2.6" fill="none" stroke="#2f4eae" stroke-width="1.8"/></svg>
<div class="t" style="left:639.52px;top:648px;letter-spacing:0.300px;">D</div>
<div class="t num" style="left:820.55px;top:648px;letter-spacing:0.300px">319.97</div>
<div class="t num" style="left:940.24px;top:648px;letter-spacing:0.300px">307.00</div>
<div class="t num" style="left:1067.75px;top:648px;letter-spacing:0.300px">12.97</div>
<div class="track" style="left:1209px;top:621px;width:17px;height:44px"></div><svg class="abs" style="left:1214.5px;top:628px" width="7" height="4" viewBox="0 0 7 4"><polygon points="0,4 7,4 3.5,0" fill="#484848"/></svg><svg class="abs" style="left:1214.5px;top:654px" width="7" height="4" viewBox="0 0 7 4"><polygon points="0,0 7,0 3.5,4" fill="#484848"/></svg>
<div class="track" style="left:614px;top:665px;width:595px;height:16px"></div><svg class="abs" style="left:619px;top:669px" width="4" height="7" viewBox="0 0 4 7"><polygon points="4,0 4,7 0,3.5" fill="#484848"/></svg><svg class="abs" style="left:1198px;top:669px" width="4" height="7" viewBox="0 0 4 7"><polygon points="0,0 0,7 4,3.5" fill="#484848"/></svg><div class="thumb" style="left:631px;top:665px;width:495.5px;height:16px"></div><svg class="abs" style="left:874.75px;top:669.5px" width="8" height="7" viewBox="0 0 8 7"><path d="M1.5 0V7M4 0V7M6.5 0V7" stroke="#444" stroke-width="1"/></svg>
<div class="track" style="left:1209px;top:665px;width:17px;height:16px"></div>
</body></html>
